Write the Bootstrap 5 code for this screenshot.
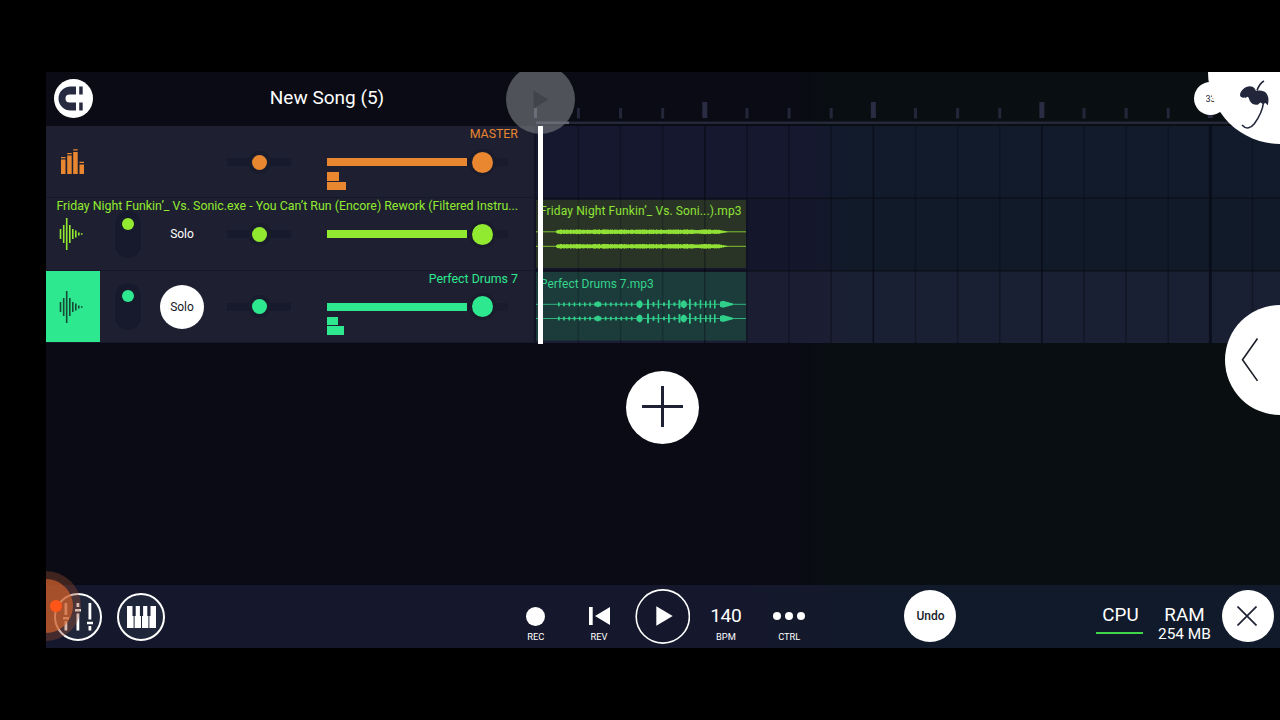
<!DOCTYPE html>
<html lang="en">
<head>
<meta charset="utf-8">
<meta name="viewport" content="width=device-width, initial-scale=1">
<title>New Song (5)</title>
<link href="https://cdn.jsdelivr.net/npm/bootstrap@5.3.0/dist/css/bootstrap.min.css" rel="stylesheet">
<style>
  :root { --orange:#e98630; --lime:#92ea30; --mint:#2ee88f; --ink:#1d2133; }
  body { background:#000; color:#fff; font-family:Roboto,"Liberation Sans",sans-serif; width:1280px; height:720px; overflow:hidden; }
  svg { display:block; }
  .daw { width:1234px; height:576px; margin:72px 0 0 46px; background:linear-gradient(90deg,#0a0b14 0,#0a0b14 755px,#090e12 785px,#090f11 100%); }
  .topbar { height:54px; }
  .topbar-left { width:490px; padding-left:8px; }
  .song { font-size:19px; line-height:24px; width:200px; margin-left:134px; margin-top:-2px; }
  .tracks { height:217px; }
  .panel { width:490px; background:#1e2031; border-right:2px solid #121423; }
  .track-row { height:72.33px; border-bottom:1px solid #15172a; color:var(--tone); padding-top:1px; }
  .track-name { top:1px; left:10px; right:16px; text-align:right; font-size:12.37px; line-height:15px; white-space:nowrap; }
  .cell-icon { width:54px; height:100%; }
  .cell-icon.armed { height:calc(100% + 1px); margin-top:-1px; background:var(--mint); color:#174936; }
  .cell-switch { width:55px; }
  .cell-solo { width:54px; color:#fff; font-size:12px; }
  .cell-pan { width:100px; }
  .pill { width:26px; height:47px; border-radius:13px; background:#171a2c; padding-top:7px; }
  .pill i { width:12px; height:12px; border-radius:50%; background:var(--tone); }
  .solo-on { width:44px; height:44px; border-radius:50%; background:#fff; color:#15171f; }
  .pan { width:64px; height:8px; background:#171a2c; }
  .knob { border-radius:50%; background:var(--tone); flex:none; }
  .pan .knob { width:15px; height:15px; box-shadow:0 0 0 4px #191c2d; }
  .cell-fader { width:181px; margin-left:18px; }
  .fader { height:8px; background:#1a1c2e; }
  .fader .fill { width:140px; height:8px; background:var(--tone); }
  .fader .knob { width:21px; height:21px; margin-left:4.5px; box-shadow:0 0 0 3px #1a1b2b; }
  .meter { top:46px; left:281px; display:grid; gap:1px; }
  .meter b { height:8.5px; background:var(--tone); }
  .foot { height:63px; margin-top:auto; background:linear-gradient(90deg,#15182c 0,#15182c 700px,#111a2a 840px,#111a2a 100%); }
  .ring { width:48px; height:48px; border:2px solid #fff; border-radius:50%; background:#1f263a; flex:none; }
  .tcell { width:63.4px; height:63px; flex:none; }
  .tcell .glyph { height:62px; }
  .tcell .tag { bottom:5px; left:0; right:0; text-align:center; font-size:9.3px; line-height:12px; }
  .num { font-size:19.2px; line-height:22px; letter-spacing:-.3px; }
  .disc { width:52px; height:52px; border-radius:50%; background:#fff; color:#181b28; font-size:12px; flex:none; }
  .stat { font-size:18.8px; line-height:20px; text-align:center; height:63px; padding-top:20px; }
  .add-disc { width:73px; height:73px; border-radius:50%; background:#fff; margin:27.5px 0 0 580px; }
  .overlay { pointer-events:none; }
  .clip-name { font:12px/15px Roboto,"Liberation Sans",sans-serif; white-space:nowrap; }
  .c1 { left:494px; top:132px; color:#8fe337; letter-spacing:.12px; }
  .c2 { left:494px; top:204.6px; color:#35d48c; }
  .touch { left:460px; top:-7px; width:69px; height:69px; border-radius:50%; background:rgba(110,112,119,.7); }
  .playhead { left:492px; top:54px; width:5px; height:218px; background:#fff; }
  .sheet { left:1179px; top:233px; width:110px; height:110px; border-radius:50%; background:#fff; }
  .barno { left:1148px; top:10px; width:33px; height:33px; border-radius:50%; background:#fff; }
  .barno span { font-size:9px; color:#252836; width:9px; overflow:hidden; line-height:12px; margin-left:-1px; }
  .brand { left:1162px; top:-72px; width:144px; height:144px; border-radius:50%; background:#fff; }
  .brand svg { position:absolute; left:31px; top:79px; }
  .halo { left:-35px; top:499px; width:70px; height:70px; border-radius:50%; background:rgba(150,75,50,.38); }
  .halo::before { content:""; position:absolute; inset:8px; border-radius:50%; background:rgba(215,98,43,.66); }
  .halo::after { content:""; position:absolute; left:39px; top:29px; width:12px; height:12px; border-radius:50%; background:#ff5518; }
</style>
</head>
<body>
<svg width="0" height="0" class="position-absolute">
  <symbol id="wave" viewBox="0 0 24 32">
    <path d="M1.500 11v10M4.700 7v18M7.700 0v32M10.800 7v18M13.800 11v10M16.800 12.500v7M19.800 14.500v3M22.700 15.300v1.400" stroke="currentColor" stroke-width="1.600" fill="none"/>
  </symbol>
</svg>
<main class="daw position-relative overflow-hidden d-flex flex-column">
  <header class="topbar d-flex">
    <div class="topbar-left d-flex align-items-center">
      <svg width="39" height="39" viewBox="0 0 39 39" style="margin-top:-1px"><circle cx="19.500" cy="19.500" r="19.500" fill="#fff"/><path d="M22 7.500H16.500a12 12 0 0 0 0 24H22v-8H15.500a3.900 3.900 0 0 1 0-8H22zM25.200 7.500h3.500v8h-3.500zM25.200 23.500h3.500v8h-3.500z" fill="#272b42"/></svg>
      <div class="song flex-shrink-0 text-center">New Song (5)</div>
    </div>
    <svg id="ruler" width="744" height="54"></svg>
  </header>

  <section class="tracks d-flex">
    <div class="panel">
      <div class="track-row position-relative d-flex align-items-center" style="--tone:var(--orange)">
        <div class="track-name position-absolute">MASTER</div>
        <div class="cell-icon d-flex align-items-center ps-3"><svg width="23" height="25" viewBox="0 0 23 25" fill="currentColor" style="margin:-1px 0 0 -1px"><path d="M0 10.500h4.500V25H0zM6.200 6.500h4.500V25H6.200zM12.200 3h4.500v22h-4.500zM18.500 15.500H23V25h-4.500zM0 8h4.500v1.300H0zM6.200 4h4.500v1.300H6.200zM12.200 .3h4.500v1.300h-4.500zM18.500 12.800H23v1.300h-4.500z"/></svg></div>
        <div class="cell-switch"></div><div class="cell-solo"></div>
        <div class="cell-pan d-flex justify-content-center"><div class="pan d-flex align-items-center justify-content-center"><div class="knob"></div></div></div>
        <div class="cell-fader"><div class="fader d-flex align-items-center"><div class="fill"></div><div class="knob"></div></div></div>
        <div class="meter position-absolute"><b style="width:12px"></b><b style="width:18.500px"></b></div>
      </div>
      <div class="track-row position-relative d-flex align-items-center" style="--tone:var(--lime)">
        <div class="cell-icon d-flex align-items-center ps-3"><svg width="24" height="32" style="margin-left:-3px"><use href="#wave"/></svg></div>
        <div class="cell-switch d-flex justify-content-center"><div class="pill d-flex justify-content-center"><i></i></div></div>
        <div class="cell-solo text-center">Solo</div>
        <div class="cell-pan d-flex justify-content-center"><div class="pan d-flex align-items-center justify-content-center"><div class="knob"></div></div></div>
        <div class="cell-fader"><div class="fader d-flex align-items-center"><div class="fill"></div><div class="knob"></div></div></div>
        <div class="track-name position-absolute">Friday Night Funkin’_ Vs. Sonic.exe - You Can’t Run (Encore) Rework (Filtered Instru...</div>
      </div>
      <div class="track-row position-relative d-flex align-items-center" style="--tone:var(--mint)">
        <div class="cell-icon armed d-flex align-items-center ps-3"><svg width="24" height="32" style="margin-left:-3px;margin-top:1px"><use href="#wave"/></svg></div>
        <div class="cell-switch d-flex justify-content-center"><div class="pill d-flex justify-content-center"><i></i></div></div>
        <div class="cell-solo d-flex justify-content-center"><div class="solo-on d-flex align-items-center justify-content-center">Solo</div></div>
        <div class="cell-pan d-flex justify-content-center"><div class="pan d-flex align-items-center justify-content-center"><div class="knob"></div></div></div>
        <div class="cell-fader"><div class="fader d-flex align-items-center"><div class="fill"></div><div class="knob"></div></div></div>
        <div class="track-name position-absolute">Perfect Drums 7</div>
        <div class="meter position-absolute"><b style="width:10.500px"></b><b style="width:16.500px"></b></div>
      </div>
    </div>
    <svg id="lanes" width="744" height="217"></svg>
  </section>

  <div class="add-disc d-flex align-items-center justify-content-center"><svg width="41" height="41" viewBox="0 0 41 41" style="margin-top:-1px"><path d="M20.500 0v41M0 20.500h41" stroke="#1d2133" stroke-width="3"/></svg></div>

  <footer class="foot d-flex align-items-center">
    <div class="ring d-flex align-items-center justify-content-center" style="margin-left:8px">
      <svg width="30" height="28" viewBox="0 0 30 28" fill="#fff"><path d="M1.500 0h2.800v12H1.500zM1.500 18h2.800v9.500H1.500zM0 14h6v2.500H0zM13.500 0h2.800v4h-2.800zM13.500 10.500h2.800v17h-2.800zM12 6h6v2.500h-6zM25.500 0h2.800v16.500h-2.800zM25.500 23h2.800v4.500h-2.800zM24 18.700h6v2.500h-6z"/></svg>
    </div>
    <div class="ring d-flex align-items-center justify-content-center" style="margin-left:15px">
      <svg width="29" height="22" viewBox="0 0 29 22"><path d="M0 0h29v22H0z" fill="#fff"/><path d="M5.500 0h3.200v10H5.500zM12.900 0h3.200v10h-3.200zM20.300 0h3.200v10h-3.200z" fill="#1f263a"/><path d="M7.100 9v13M14.500 9v13M21.900 9v13" stroke="#1f263a"/></svg>
    </div>
    <div class="d-flex" style="margin-left:339px">
      <div class="tcell position-relative"><div class="glyph d-flex align-items-center justify-content-center"><svg width="19" height="19"><circle cx="9.500" cy="9.500" r="9.500" fill="#fff"/></svg></div><div class="tag position-absolute">REC</div></div>
      <div class="tcell position-relative"><div class="glyph d-flex align-items-center justify-content-center"><svg width="21" height="18" fill="#fff"><path d="M0 0h3.700v18H0zM21 0v18L6 9z"/></svg></div><div class="tag position-absolute">REV</div></div>
      <div class="tcell position-relative"><div class="glyph d-flex align-items-center justify-content-center"><svg width="55" height="55" viewBox="0 0 55 55"><circle cx="27.800" cy="27.500" r="26.600" fill="none" stroke="#fff" stroke-width="1.600"/><path d="M21.300 17.200v19.600l16.400-9.800z" fill="#fff"/></svg></div></div>
      <div class="tcell position-relative"><div class="glyph d-flex align-items-center justify-content-center num">140</div><div class="tag position-absolute">BPM</div></div>
      <div class="tcell position-relative"><div class="glyph d-flex align-items-center justify-content-center"><svg width="32" height="8" fill="#fff"><circle cx="4" cy="4" r="4"/><circle cx="16" cy="4" r="4"/><circle cx="28" cy="4" r="4"/></svg></div><div class="tag position-absolute">CTRL</div></div>
    </div>
    <div class="disc d-flex align-items-center justify-content-center fw-medium" style="margin-left:83.500px;padding-bottom:1px;margin-top:-1px">Undo</div>
    <div class="stat" style="margin-left:140px;width:48px"><div>CPU</div><div style="height:2px;width:47px;margin-top:7px;background:#3fd64a"></div></div>
    <div class="stat" style="margin-left:8px;width:64px"><div>RAM</div><div style="font-size:15.400px;line-height:18px;margin:0 -4px">254 MB</div></div>
    <div class="disc d-flex align-items-center justify-content-center" style="margin-left:6px;margin-top:-1px"><svg width="20" height="20" style="margin-left:-2px"><path d="M.5 .5l19 19M19.500 .5l-19 19" stroke="#1d2133" stroke-width="1.700"/></svg></div>
  </footer>

  <div class="clip-name c1 position-absolute">Friday Night Funkin’_ Vs. Soni...).mp3</div>
  <div class="clip-name c2 position-absolute">Perfect Drums 7.mp3</div>
  <div class="touch overlay position-absolute"><svg width="69" height="69"><path d="M27.500 25.500v18l15-9z" fill="#42444c"/><path d="M28 43h3v10h-3z" fill="#6c6d78"/><path d="M30 56.500h33v2.500H30z" fill="#676874"/></svg></div>
  <div class="playhead overlay position-absolute"></div>
  <div class="barno position-absolute d-flex align-items-center justify-content-center"><span>33</span></div>
  <div class="brand position-absolute">
    <svg width="34" height="54" viewBox="0 0 34 54"><path d="M5.500 18.500c-1.800 .6-4.200 0-4.500-2.500 .4-5.500 7.500-10.500 12.500-8.200 1.800 .9 2.800 2.400 3.500 4.200 3.800-.8 8.200-.6 10.500 2.500 2.500 3.700 2.300 7.300 1.300 11.800l-2.300-2.200-2.600 .8-2.600-1.300-2.200 2c-3.800 .8-7-1.200-8.500-4.200-.4-1.700-1-3.100-2-3.700l-2.300 1.300-1.600-1.500z" fill="#22263b"/><path d="M25 2c-3 1.500-5 4-7 9.500" fill="none" stroke="#22263b" stroke-width="1.700"/><path d="M24.500 23.500c-1 8-5 15.500-9 21-3.500 4.500-8 6.500-12.500 1.500" fill="none" stroke="#22263b" stroke-width="1.600"/></svg>
  </div>
  <div class="sheet position-absolute"><svg width="55" height="110"><path d="M32.500 33.500l-15 21.200 15 21.200" fill="none" stroke="#1b1d27" stroke-width="1.600"/></svg></div>
  <div class="halo overlay position-absolute"></div>
</main>
<script>
const BEAT = 42.13;
const box = (x, y, w, h, fill) => `<rect x="${x}" y="${y}" width="${w}" height="${h}" fill="${fill}"/>`;

// ruler: a tick for each beat, a heavier one for each bar
let r = '';
for (let i = 1; i < 17; i++) {
  const x = i * BEAT + .3;
  r += i % 4 ? box(x - 1.5, 36, 3, 10.5, '#24263a') : box(x - 2.5, 30, 5, 16, '#292c42');
}
r += box(0, 49.5, 744, 2.5, '#242839');
document.getElementById('ruler').innerHTML = r;

// arrangement lanes, clips and their waveforms
let s = `<defs>
<linearGradient id="la"><stop offset=".37" stop-color="#15182f"/><stop offset=".42" stop-color="#111b2c"/></linearGradient>
<linearGradient id="lb"><stop offset=".37" stop-color="#14172b"/><stop offset=".42" stop-color="#101a29"/></linearGradient>
<linearGradient id="lc"><stop offset=".37" stop-color="#1b1e33"/><stop offset=".42" stop-color="#1a2033"/></linearGradient></defs>`;
s += box(0, 0, 744, 72, 'url(#la)') + box(0, 72, 744, 72.500, 'url(#lb)') + box(0, 144.500, 744, 72.500, 'url(#lc)');
s += box(0, 71.500, 744, 1.500, '#0d1119') + box(0, 144, 744, 1.500, '#0d1119');
s += box(0, 74, 210, 68, '#293426') + box(0, 146, 210, 68.500, '#1c3b3b');
for (let i = 1; i < 18; i++) {
  const x = i * BEAT + .3, w = i === 16 ? 3 : 1.5;
  s += `<rect x="${x - w / 2}" y="0" width="${w}" height="217" fill="#090d18" opacity="${i % 4 ? .5 : .85}"/>`;
}
s += '<rect x="0" y="74" width="210" height="68" fill="#293426" opacity=".5"/><rect x="0" y="146" width="210" height="68.5" fill="#1c3b3b" opacity=".5"/>';
for (const y of [105.8, 120.3]) {
  s += box(0, y - .5, 210, 1, '#7fc42f');
  for (let x = 20; x < 191; x++) {
    const edge = Math.min(1, (x - 18) / 4, (193 - x) / 12);
    const n = Math.abs(Math.sin(x * x * 12.9898) * 43.7) % 1;
    const h = (3.4 + 1.5 * n) * edge;
    s += box(x, y - h / 2, 1.1, h, '#90e035');
  }
}
const hits = [];
for (let x = 22; x < 100; x += 5.2) hits.push([x, 1.7, 4.2]);
hits.push([58.5,6,4],[60,4,6],[100.500,6,6],[102,3.500,8],[111,2,10],[116.500,2,5],[121.700,1.500,9],[127,2,4],[132,1.800,9],[137.500,2,4],[142.500,2,9],[144.800,6,6],[146,3.500,8],[153,1.800,11],[158.500,2,5],[163.700,1.600,9],[169,1.600,7],[173.500,1.600,8],[178,1.600,9]);
for (const y of [178.300, 192.500]) {
  s += box(0, y - .5, 210, 1, '#2fb57d');
  for (const [x, w, h] of hits) {
    s += `<rect x="${x}" y="${y - h / 2}" width="${w}" height="${h}" rx="${Math.min(w / 2, 2)}" fill="#30d08a"/>`;
  }
  s += `<path d="M184 ${y - 2.500}l3-1 10 2.800v1.400l-10 2.800-3-1z" fill="#30d08a"/>`;
}
document.getElementById('lanes').innerHTML = s;
</script>
<script src="https://cdn.jsdelivr.net/npm/bootstrap@5.3.0/dist/js/bootstrap.bundle.min.js"></script>
</body>
</html>
